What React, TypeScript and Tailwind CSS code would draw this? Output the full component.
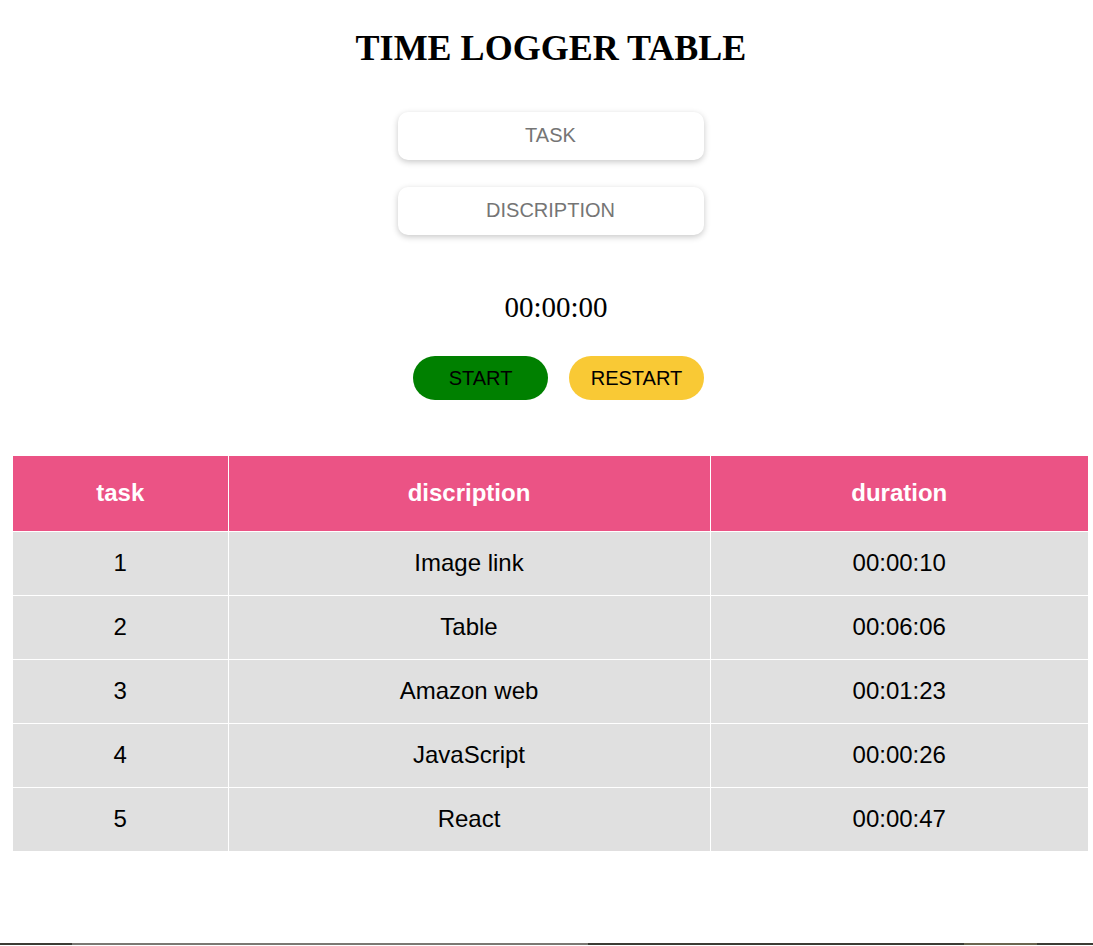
import { useState } from "react";

type LogRow = { task: string; discription: string; duration: string };

const rows: LogRow[] = [
  { task: "1", discription: "Image link", duration: "00:00:10" },
  { task: "2", discription: "Table", duration: "00:06:06" },
  { task: "3", discription: "Amazon web", duration: "00:01:23" },
  { task: "4", discription: "JavaScript", duration: "00:00:26" },
  { task: "5", discription: "React", duration: "00:00:47" },
];

const inputCls =
  "block h-[48px] w-[306px] rounded-[10px] bg-white pb-[2px] text-center font-['Liberation_Sans',Arial,sans-serif] text-[20px] text-[#333] shadow-[0_2px_6px_rgba(0,0,0,0.22)] outline-none placeholder:text-[#757575]";

export default function App() {
  const [task, setTask] = useState("");
  const [desc, setDesc] = useState("");

  return (
    <div className="flex min-h-[946px] flex-col bg-white">
      <div className="flex-1">
        <h1 className="pt-[29px] pl-[9px] text-center font-['Liberation_Serif','Times_New_Roman',serif] text-[36px] leading-[38px] font-bold text-black">
          TIME LOGGER TABLE
        </h1>

        <div className="mt-[45px] flex flex-col items-center gap-[27px] pl-[8px]">
          <input className={inputCls} placeholder="TASK" value={task} onChange={(e) => setTask(e.target.value)} />
          <input className={inputCls} placeholder="DISCRIPTION" value={desc} onChange={(e) => setDesc(e.target.value)} />
        </div>

        <div className="mt-[54px] pl-[19px] text-center font-['Liberation_Serif','Times_New_Roman',serif] text-[29px] leading-[36px] text-black">
          00:00:00
        </div>

        <div className="mt-[31px] flex justify-center gap-[21px] pl-[24px]">
          <button type="button" className="h-[44px] w-[135px] rounded-full bg-[#008000] font-['Liberation_Sans',Arial,sans-serif] text-[20px] text-black">
            START
          </button>
          <button type="button" className="h-[44px] w-[135px] rounded-full bg-[#f9c935] font-['Liberation_Sans',Arial,sans-serif] text-[20px] text-black">
            RESTART
          </button>
        </div>

        <div className="mt-[56px] pr-[5px] pl-[13px]">
          <table className="w-full border-collapse font-['Liberation_Sans',Arial,sans-serif] text-[24px]">
            <thead>
              <tr className="h-[75px] bg-[#eb5385] text-white">
                <th className="w-[215px] border-r border-b border-white font-bold">task</th>
                <th className="w-[482px] border-r border-b border-white font-bold">discription</th>
                <th className="border-b border-white font-bold">duration</th>
              </tr>
            </thead>
            <tbody>
              {rows.map((r, i) => (
                <tr key={r.task} className="h-[64px] bg-[#e0e0e0] text-center text-black">
                  <td className={`border-r border-white ${i < rows.length - 1 ? "border-b" : ""}`}>{r.task}</td>
                  <td className={`border-r border-white ${i < rows.length - 1 ? "border-b" : ""}`}>{r.discription}</td>
                  <td className={`border-white ${i < rows.length - 1 ? "border-b" : ""}`}>{r.duration}</td>
                </tr>
              ))}
            </tbody>
          </table>
        </div>
      </div>

      <div className="mb-[1px] flex h-[2px]">
        <div className="w-[72px] bg-[#3c3b34]" />
        <div className="w-[516px] bg-[#7b7873]" />
        <div className="w-[376px] bg-[#3c3b34]" />
        <div className="w-[73px] bg-[#6b6650]" />
        <div className="flex-1 bg-[#3c3b34]" />
      </div>
    </div>
  );
}
